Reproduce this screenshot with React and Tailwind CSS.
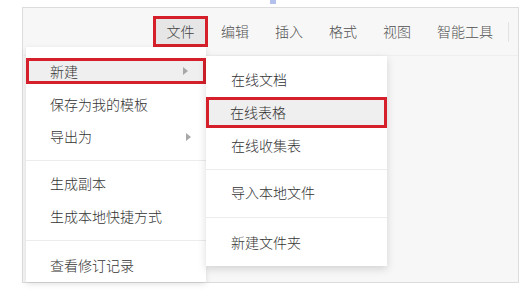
import React from "react";

const font = { fontFamily: '"Noto Sans CJK SC", "Noto Sans", sans-serif' };

function Arrow() {
  return (
    <svg width="5" height="8" viewBox="0 0 5 8" className="absolute right-[15px] top-1/2 -translate-y-1/2">
      <path d="M0 0 L5 4 L0 8 Z" fill="#a8a8a8" />
    </svg>
  );
}

function Item({ children, arrow, hl, pl = "pl-6", h = "h-[26px]" }) {
  return (
    <div className="relative h-[33px] flex items-center">
      {hl ? (
        <div className={`relative w-full ${h} flex items-center border-[3px] border-[#d5202b] bg-[#efefef] pl-[21px]`}>
          {children}
          {arrow && <Arrow />}
        </div>
      ) : (
        <div className={`relative w-full flex items-center ${pl}`}>
          {children}
          {arrow && <Arrow />}
        </div>
      )}
    </div>
  );
}

function Sep({ h }) {
  return (
    <div className={`${h} flex items-center`}>
      <div className="h-px w-full bg-[#ececec]" />
    </div>
  );
}

export default function App() {
  const tabs = ["编辑", "插入", "格式", "视图", "智能工具"];
  return (
    <div className="relative w-[532px] h-[300px] bg-white overflow-hidden text-[14px] font-light text-[#333]" style={font}>
      <div className="absolute left-[270px] top-0 w-[6px] h-[4px] bg-[#b3c0ec]" />
      <div className="absolute left-[22px] top-[7px] w-[497px] h-[276px] border border-[#dcdcdc] bg-[#f7f7f7] flex flex-col">
        <div className="h-[48px] flex items-center border-b border-[#efefef] pl-[130px]">
          <div className="h-[31px] w-[55px] border-[3px] border-[#d5202b] bg-[#e6e6e6] flex items-center justify-center text-[#444]">
            文件
          </div>
          {tabs.map((t) => (
            <div key={t} className="px-[13px] text-[#505050]">{t}</div>
          ))}
          <div className="ml-[2px] w-px h-[20px] bg-[#e2e2e2]" />
        </div>
      </div>

      {/* left menu */}
      <div className="absolute left-[26px] top-[47px] w-[180px] h-[235px] bg-white shadow-[0_2px_6px_rgba(0,0,0,0.12)] pt-[8px] flex flex-col">
        <Item hl arrow>新建</Item>
        <Item>保存为我的模板</Item>
        <Item arrow>导出为</Item>
        <Sep h="h-[14px]" />
        <Item>生成副本</Item>
        <Item>生成本地快捷方式</Item>
        <Sep h="h-[17px]" />
        <Item>查看修订记录</Item>
      </div>

      {/* submenu */}
      <div className="absolute left-[206px] top-[56px] w-[181px] h-[210px] bg-white shadow-[0_3px_8px_rgba(0,0,0,0.15)] pt-[7px] flex flex-col">
        <Item pl="pl-[25px]">在线文档</Item>
        <Item hl h="h-[31px]">在线表格</Item>
        <Item pl="pl-[25px]">在线收集表</Item>
        <Sep h="h-[14px]" />
        <Item pl="pl-[25px]">导入本地文件</Item>
        <Sep h="h-[17px]" />
        <Item pl="pl-[25px]">新建文件夹</Item>
      </div>
    </div>
  );
}
